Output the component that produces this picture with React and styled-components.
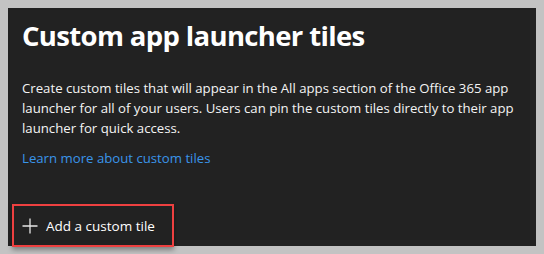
import React from 'react';
import styled, { createGlobalStyle } from 'styled-components';

const GlobalStyle = createGlobalStyle`
  html, body {
    margin: 0;
    padding: 0;
    background: #c3c3c3;
  }
  body {
    font-family: "Open Sans", "Noto Sans", sans-serif;
  }
`;

const Panel = styled.section`
  box-sizing: border-box;
  margin: 8px;
  width: 528px;
  height: 238px;
  background: #222222;
  color: #ffffff;
  padding: 8px 8px 0 14px;
  display: flex;
  flex-direction: column;
`;

const Title = styled.h1`
  margin: 0;
  font-size: 27.5px;
  font-weight: 700;
  line-height: 40px;
  letter-spacing: -0.65px;
`;

const Description = styled.p`
  margin: 22px 0 0 0;
  font-size: 13.2px;
  line-height: 20px;
  color: #f4f4f4;
`;

const Link = styled.a`
  margin-top: 10px;
  font-size: 13.2px;
  line-height: 20px;
  color: #3a95ea;
  text-decoration: none;
  align-self: flex-start;
`;

const Footer = styled.div`
  margin-top: auto;
  margin-left: -10px;
  margin-bottom: -1px;
  align-self: flex-start;
`;

const AddButton = styled.button`
  box-sizing: border-box;
  display: flex;
  align-items: center;
  gap: 8px;
  width: 162px;
  height: 43px;
  padding: 0 0 0 8px;
  background: #222222;
  border: 2px solid #ee4040;
  box-shadow: 0 3px 5px rgba(0, 0, 0, 0.35);
  color: #ffffff;
  font-family: inherit;
  font-size: 13.5px;
  cursor: pointer;
`;

const PlusIcon = () => (
  <svg width="16" height="16" viewBox="0 0 16 16">
    <path d="M8 0.5v15M0.5 8h15" stroke="#e6e6e6" strokeWidth="1.3" fill="none" />
  </svg>
);

export default function App() {
  return (
    <>
      <GlobalStyle />
      <Panel>
        <Title>Custom app launcher tiles</Title>
        <Description>
          Create custom tiles that will appear in the All apps section of the Office 365 app
          launcher for all of your users. Users can pin the custom tiles directly to their app
          launcher for quick access.
        </Description>
        <Link href="#">Learn more about custom tiles</Link>
        <Footer>
          <AddButton type="button">
            <PlusIcon />
            Add a custom tile
          </AddButton>
        </Footer>
      </Panel>
    </>
  );
}
